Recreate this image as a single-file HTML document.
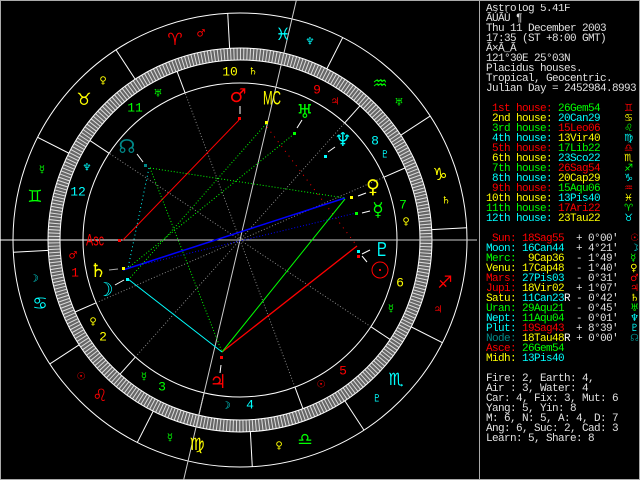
<!DOCTYPE html>
<html><head><meta charset="utf-8"><style>
html,body{margin:0;padding:0;background:#000;width:640px;height:480px;overflow:hidden}
#c{position:absolute;left:0;top:0}
pre{position:absolute;left:486px;top:4px;width:152px;overflow:hidden;margin:0;font-family:"Liberation Mono",monospace;font-size:11px;letter-spacing:-0.6px;line-height:10px;color:#e0e0e0;white-space:pre}
.r{color:#f00}.y{color:#ff0}.g{color:#0f0}.c{color:#0ff}.t{color:#088}.w{color:#fff}
.s{font-family:"DejaVu Sans",sans-serif;font-size:10px;letter-spacing:0}
.a{font-family:"Liberation Sans Narrow","Liberation Sans",sans-serif;font-size:8px;letter-spacing:0}
</style></head><body>
<svg id="c" width="640" height="480" viewBox="0 0 640 480">
<rect x="0.5" y="0.5" width="639" height="479" fill="none" stroke="#aaa"/>
<line x1="479.5" y1="0" x2="479.5" y2="480" stroke="#aaa"/>
<g transform="translate(240,240)" fill="none">
<circle r="227" stroke="#fff"/>
<circle r="186" stroke="#666" stroke-width="12"/>
<circle r="186" stroke="#ddd" stroke-width="12" stroke-dasharray="1 2.2463" transform="rotate(-3.1)"/>
<circle r="192" stroke="#fff"/>
<circle r="180" stroke="#fff"/>
<circle r="157" stroke="#fff"/>
<g stroke="#fff">
<line x1="192" x2="227" transform="rotate(-93.1)"/><line x1="192" x2="227" transform="rotate(-123.1)"/>
<line x1="192" x2="227" transform="rotate(-153.1)"/><line x1="192" x2="227" transform="rotate(-183.1)"/>
<line x1="192" x2="227" transform="rotate(-213.1)"/><line x1="192" x2="227" transform="rotate(-243.1)"/>
<line x1="192" x2="227" transform="rotate(-273.1)"/><line x1="192" x2="227" transform="rotate(-303.1)"/>
<line x1="192" x2="227" transform="rotate(-333.1)"/><line x1="192" x2="227" transform="rotate(-3.1)"/>
<line x1="192" x2="227" transform="rotate(-33.1)"/><line x1="192" x2="227" transform="rotate(-63.1)"/>
<line x1="157" x2="180" transform="rotate(-203.58)"/><line x1="157" x2="180" transform="rotate(-228.2)"/>
<line x1="157" x2="180" transform="rotate(-256.77)"/><line x1="157" x2="180" transform="rotate(-290.47)"/>
<line x1="157" x2="180" transform="rotate(-326.47)"/><line x1="157" x2="180" transform="rotate(-23.58)"/>
<line x1="157" x2="180" transform="rotate(-48.2)"/><line x1="157" x2="180" transform="rotate(-110.47)"/>
<line x1="157" x2="180" transform="rotate(-146.47)"/>
</g>
<g stroke="#888" stroke-dasharray="1 2">
<line x1="-157" x2="157" transform="rotate(-23.58)"/>
<line x1="-157" x2="157" transform="rotate(-48.2)"/>
<line x1="-157" x2="157" transform="rotate(-110.47)"/>
<line x1="-157" x2="157" transform="rotate(-146.47)"/>
</g>
</g>
<line x1="0" y1="240" x2="122" y2="240" stroke="#fff"/>
<line x1="122" y1="240" x2="477" y2="240" stroke="#ccc"/>
<line x1="296.4" y1="0" x2="183.6" y2="480" stroke="#ccc"/>
<g fill="none">
<line x1="123" y1="240" x2="239" y2="120" stroke="#f00"/>
<line x1="267" y1="127" x2="357" y2="246" stroke="#f00" stroke-dasharray="1 5"/>
<line x1="222" y1="352" x2="357" y2="246" stroke="#f00" stroke-width="1.3"/>
<line x1="345" y1="199" x2="222" y2="352" stroke="#0f0"/>
<line x1="123" y1="270" x2="345" y2="198" stroke="#00f" stroke-width="1.5"/>
<line x1="128" y1="268" x2="356" y2="213" stroke="#00f" stroke-dasharray="1 2"/>
<line x1="128" y1="279" x2="222" y2="352" stroke="#0ff"/>
<line x1="149" y1="168" x2="128" y2="268" stroke="#0ff" stroke-dasharray="1 3"/>
<line x1="150" y1="168" x2="345" y2="198" stroke="#0f0" stroke-dasharray="1 2"/>
<line x1="150" y1="168" x2="222" y2="352" stroke="#0f0" stroke-dasharray="1 2"/>
<line x1="294" y1="134" x2="128" y2="268" stroke="#0f0" stroke-dasharray="1 2"/>
<line x1="266" y1="124" x2="130" y2="278" stroke="#0f0" stroke-dasharray="1 2"/>
</g>
<g stroke="#fff">
<line x1="240" y1="106" x2="240" y2="114"/><line x1="302" y1="120" x2="297" y2="128"/>
<line x1="335" y1="147" x2="328" y2="152"/><line x1="358" y1="196" x2="366" y2="193"/>
<line x1="362" y1="213" x2="370" y2="211"/><line x1="362" y1="254" x2="370" y2="250"/>
<line x1="362" y1="256" x2="367" y2="262"/><line x1="221" y1="365" x2="220" y2="373"/>
<line x1="115" y1="285" x2="124" y2="280"/><line x1="137" y1="154" x2="143" y2="162"/>
</g>
<line x1="109" y1="270" x2="118" y2="269" stroke="#aaa"/>
<g>
<rect x="238" y="117" width="3" height="3" fill="#f00"/><rect x="265" y="121" width="3" height="3" fill="#ff0"/>
<rect x="293" y="132" width="3" height="3" fill="#0f0"/><rect x="324" y="155" width="3" height="3" fill="#0ff"/>
<rect x="350" y="196" width="3" height="3" fill="#ff0"/><rect x="355" y="212" width="3" height="3" fill="#0f0"/>
<rect x="357" y="250" width="3" height="3" fill="#0ff"/><rect x="357" y="255" width="3" height="3" fill="#f00"/>
<rect x="220" y="356" width="3" height="3" fill="#f00"/><rect x="126" y="278" width="3" height="3" fill="#0ff"/>
<rect x="122" y="267" width="3" height="3" fill="#ff0"/><rect x="144" y="164" width="3" height="3" fill="#088"/>
<rect x="118" y="239" width="3" height="3" fill="#f00"/>
</g>
<g font-family="DejaVu Sans,sans-serif" font-size="17" text-anchor="middle" dominant-baseline="central">
<text x="175" y="40" fill="#f00">♈</text><text x="84" y="100" fill="#ff0">♉</text>
<text x="35" y="197" fill="#0f0">♊</text><text x="40" y="304" fill="#0ff">♋</text>
<text x="100" y="396" fill="#f00">♌</text><text x="197" y="445" fill="#ff0">♍</text>
<text x="305" y="440" fill="#0f0">♎</text><text x="396" y="380" fill="#0ff">♏</text>
<text x="445" y="283" fill="#f00">♐</text><text x="440" y="175" fill="#ff0">♑</text>
<text x="380" y="84" fill="#0f0">♒</text><text x="283" y="35" fill="#0ff">♓</text>
</g>
<g font-family="DejaVu Sans,sans-serif" font-size="10" text-anchor="middle" dominant-baseline="central">
<text x="201" y="34" fill="#f00">♂</text><text x="103" y="81" fill="#ff0">♀</text>
<text x="42" y="170" fill="#0f0">☿</text><text x="34" y="279" fill="#0ff">☽</text>
<text x="81" y="377" fill="#f00">☉</text><text x="170" y="438" fill="#0f0">☿</text>
<text x="279" y="446" fill="#ff0">♀</text><text x="377" y="399" fill="#0ff">♇</text>
<text x="438" y="310" fill="#f00">♃</text><text x="446" y="201" fill="#ff0">♄</text>
<text x="399" y="103" fill="#0f0">♅</text><text x="310" y="42" fill="#0ff">♆</text>
<text x="253" y="72" fill="#ff0">♄</text><text x="158" y="94" fill="#0f0">♅</text>
<text x="87" y="168" fill="#0ff">♆</text><text x="73" y="256" fill="#f00">♂</text>
<text x="93" y="322" fill="#ff0">♀</text><text x="144" y="377" fill="#0f0">☿</text>
<text x="226" y="406" fill="#0ff">☽</text><text x="321" y="385" fill="#f00">☉</text>
<text x="391" y="309" fill="#0f0">☿</text><text x="406" y="222" fill="#ff0">♀</text>
<text x="385" y="155" fill="#0ff">♇</text><text x="335" y="102" fill="#f00">♃</text>
</g>
<g font-family="Liberation Mono,monospace" font-size="13" text-anchor="middle" dominant-baseline="central">
<text x="230" y="72" fill="#ff0">10</text><text x="135" y="108" fill="#0f0">11</text>
<text x="78" y="192" fill="#0ff">12</text><text x="75" y="273" fill="#f00">1</text>
<text x="103" y="337" fill="#ff0">2</text><text x="162" y="387" fill="#0f0">3</text>
<text x="250" y="405" fill="#0ff">4</text><text x="343" y="371" fill="#f00">5</text>
<text x="400" y="283" fill="#ff0">6</text><text x="403" y="205" fill="#0f0">7</text>
<text x="375" y="141" fill="#0ff">8</text><text x="317" y="90" fill="#f00">9</text>
</g>
<g font-family="DejaVu Sans,sans-serif" font-size="19" text-anchor="middle" dominant-baseline="central">
<text x="238" y="96" fill="#f00">♂</text><text x="305" y="112" fill="#0f0">♅</text>
<text x="343" y="140" fill="#0ff">♆</text><text x="373" y="187" fill="#ff0">♀</text>
<text x="378" y="210" fill="#0f0">☿</text><text x="382" y="250" fill="#0ff">♇</text>
<text x="218" y="382" fill="#f00">♃</text><text x="105" y="290" fill="#0ff">☽</text>
<text x="98" y="271" fill="#ff0">♄</text><text x="127" y="147" fill="#088">☊</text>
</g>
<circle cx="380" cy="270" r="8" fill="none" stroke="#f00"/><rect x="379" y="269" width="2" height="2" fill="#f00"/>
<text x="272" y="99" fill="#ff0" font-family="Liberation Sans Narrow,Liberation Sans,sans-serif" font-size="19" text-anchor="middle" dominant-baseline="central" textLength="18" lengthAdjust="spacingAndGlyphs">MC</text>
<text x="95" y="240" fill="#f00" font-family="Liberation Sans Narrow,Liberation Sans,sans-serif" font-size="17" text-anchor="middle" dominant-baseline="central" textLength="18" lengthAdjust="spacingAndGlyphs">Asc</text>
</svg>
<pre>Astrolog 5.41F
ÃÚÃÙ ¶
Thu 11 December 2003
17:35 (ST +8:00 GMT)
Ã×Ã_Ã
121°30E 25°03N
Placidus houses.
Tropical, Geocentric.
Julian Day = 2452984.8993

<span class="r"> 1st house:</span> <span class="g">26Gem54</span>    <span class="r s">♊</span>
<span class="y"> 2nd house:</span> <span class="c">20Can29</span>    <span class="y s">♋</span>
<span class="g"> 3rd house:</span> <span class="r">15Leo06</span>    <span class="g s">♌</span>
<span class="c"> 4th house:</span> <span class="y">13Vir40</span>    <span class="c s">♍</span>
<span class="r"> 5th house:</span> <span class="g">17Lib22</span>    <span class="r s">♎</span>
<span class="y"> 6th house:</span> <span class="c">23Sco22</span>    <span class="y s">♏</span>
<span class="g"> 7th house:</span> <span class="r">26Sag54</span>    <span class="g s">♐</span>
<span class="c"> 8th house:</span> <span class="y">20Cap29</span>    <span class="c s">♑</span>
<span class="r"> 9th house:</span> <span class="g">15Aqu06</span>    <span class="r s">♒</span>
<span class="y">10th house:</span> <span class="c">13Pis40</span>    <span class="y s">♓</span>
<span class="g">11th house:</span> <span class="r">17Ari22</span>    <span class="g s">♈</span>
<span class="c">12th house:</span> <span class="y">23Tau22</span>    <span class="c s">♉</span>

<span class="r"> Sun:</span> <span class="r">18Sag55</span>  + 0°00'  <span class="r s">☉</span>
<span class="c">Moon:</span> <span class="c">16Can44</span>  + 4°21'  <span class="c s">☽</span>
<span class="g">Merc:</span> <span class="y"> 9Cap36</span>  - 1°49'  <span class="g s">☿</span>
<span class="y">Venu:</span> <span class="y">17Cap48</span>  - 1°40'  <span class="y s">♀</span>
<span class="r">Mars:</span> <span class="c">27Pis03</span>  - 0°31'  <span class="r s">♂</span>
<span class="r">Jupi:</span> <span class="y">18Vir02</span>  + 1°07'  <span class="r s">♃</span>
<span class="y">Satu:</span> <span class="c">11Can23</span><span class="w">R</span> - 0°42'  <span class="y s">♄</span>
<span class="g">Uran:</span> <span class="g">29Aqu21</span>  - 0°45'  <span class="g s">♅</span>
<span class="c">Nept:</span> <span class="g">11Aqu04</span>  - 0°01'  <span class="c s">♆</span>
<span class="c">Plut:</span> <span class="r">19Sag43</span>  + 8°39'  <span class="c s">♇</span>
<span class="t">Node:</span> <span class="y">18Tau48</span><span class="w">R</span> + 0°00'  <span class="t s">☊</span>
<span class="r">Asce:</span> <span class="g">26Gem54</span>                <span class="r a">Asc</span>
<span class="y">Midh:</span> <span class="c">13Pis40</span>                <span class="y a">MC</span>

Fire: 2, Earth: 4,
Air : 3, Water: 4
Car: 4, Fix: 3, Mut: 6
Yang: 5, Yin: 8
M: 6, N: 5, A: 4, D: 7
Ang: 6, Suc: 2, Cad: 3
Learn: 5, Share: 8</pre>
</body></html>
